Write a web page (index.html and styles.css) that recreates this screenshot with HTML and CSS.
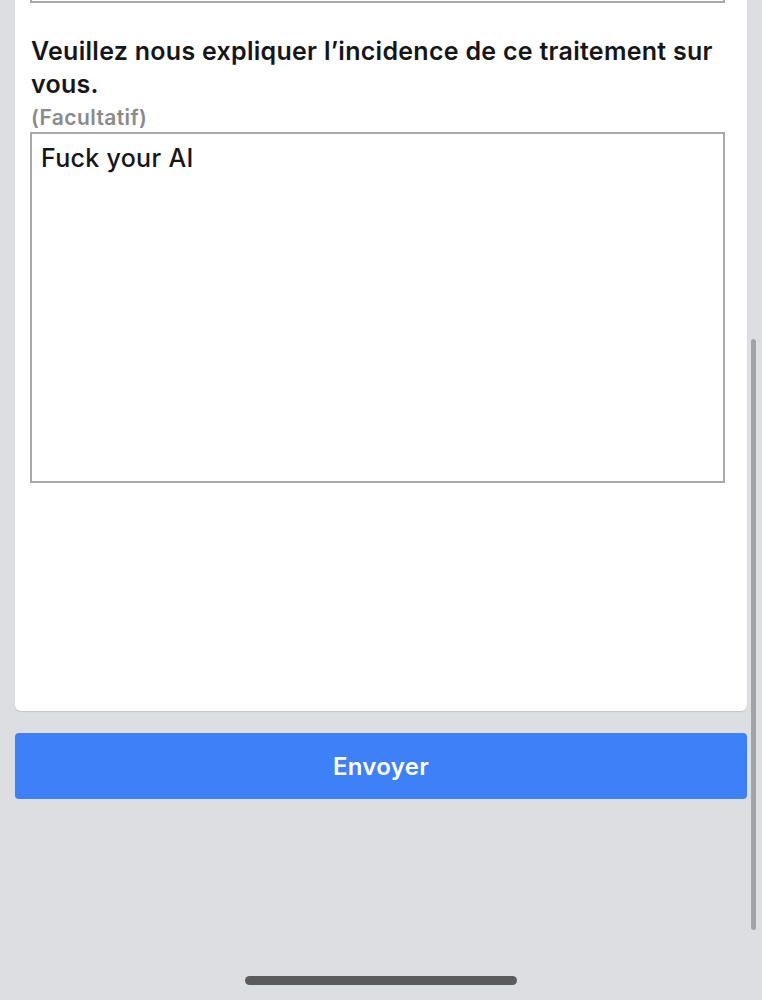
FILE: index.html
```html
<!DOCTYPE html>
<html lang="fr">
<head>
<meta charset="utf-8">
<title>Formulaire</title>
<link rel="stylesheet" href="styles.css">
</head>
<body>
<main class="page">
  <section class="card">
    <div class="prev-field"></div>
    <h2 class="question">Veuillez nous expliquer l’incidence de ce traitement sur vous.</h2>
    <div class="optional">(Facultatif)</div>
    <div class="textarea">Fuck your AI</div>
  </section>
  <button class="submit" type="button">Envoyer</button>
</main>
<div class="scrollbar"></div>
<div class="home-indicator"></div>
</body>
</html>
```
FILE: styles.css
```css
html, body {
  margin: 0;
  padding: 0;
  background: #dddee2;
  height: 1000px;
  overflow: hidden;
}
body {
  font-family: Inter, "Open Sans", "Liberation Sans", sans-serif;
  color: #1c1c1e;
}
.page {
  display: flex;
  flex-direction: column;
  padding: 0 15px;
}
.card {
  background: #ffffff;
  border-radius: 0 0 6px 6px;
  box-shadow: 0 1px 1px rgba(0, 0, 0, 0.12);
  padding: 0 22px 0 15px;
  height: 711px;
  box-sizing: border-box;
  display: flex;
  flex-direction: column;
}
.prev-field {
  height: 1px;
  border: 2px solid #a9a9ab;
  border-top: none;
}
.question {
  margin: 32px 0 0 1px;
  font-size: 25px;
  font-weight: 600;
  line-height: 33px;
  letter-spacing: 0.28px;
  color: #161618;
}
.optional {
  margin: 4px 0 0 1px;
  font-size: 21px;
  font-weight: 600;
  line-height: 26px;
  letter-spacing: 0.4px;
  color: #8a8a8d;
}
.textarea {
  margin-top: 1px;
  height: 329px;
  border: 2px solid #a9a9ab;
  padding: 9px 9px;
  font-size: 25px;
  font-weight: 500;
  line-height: 30px;
  letter-spacing: 0.3px;
  color: #161618;
}
.submit {
  margin-top: 22px;
  height: 66px;
  border: none;
  border-radius: 4px;
  background: #3e80f8;
  color: #ffffff;
  font-family: inherit;
  font-size: 24px;
  font-weight: 600;
  letter-spacing: 0.3px;
  padding: 0;
}
.scrollbar {
  position: absolute;
  left: 751px;
  top: 339px;
  width: 5px;
  height: 591px;
  border-radius: 3px;
  background: #a3a3a7;
}
.home-indicator {
  position: absolute;
  left: 245px;
  top: 976px;
  width: 272px;
  height: 9px;
  border-radius: 5px;
  background: #5b5b5e;
}
```
